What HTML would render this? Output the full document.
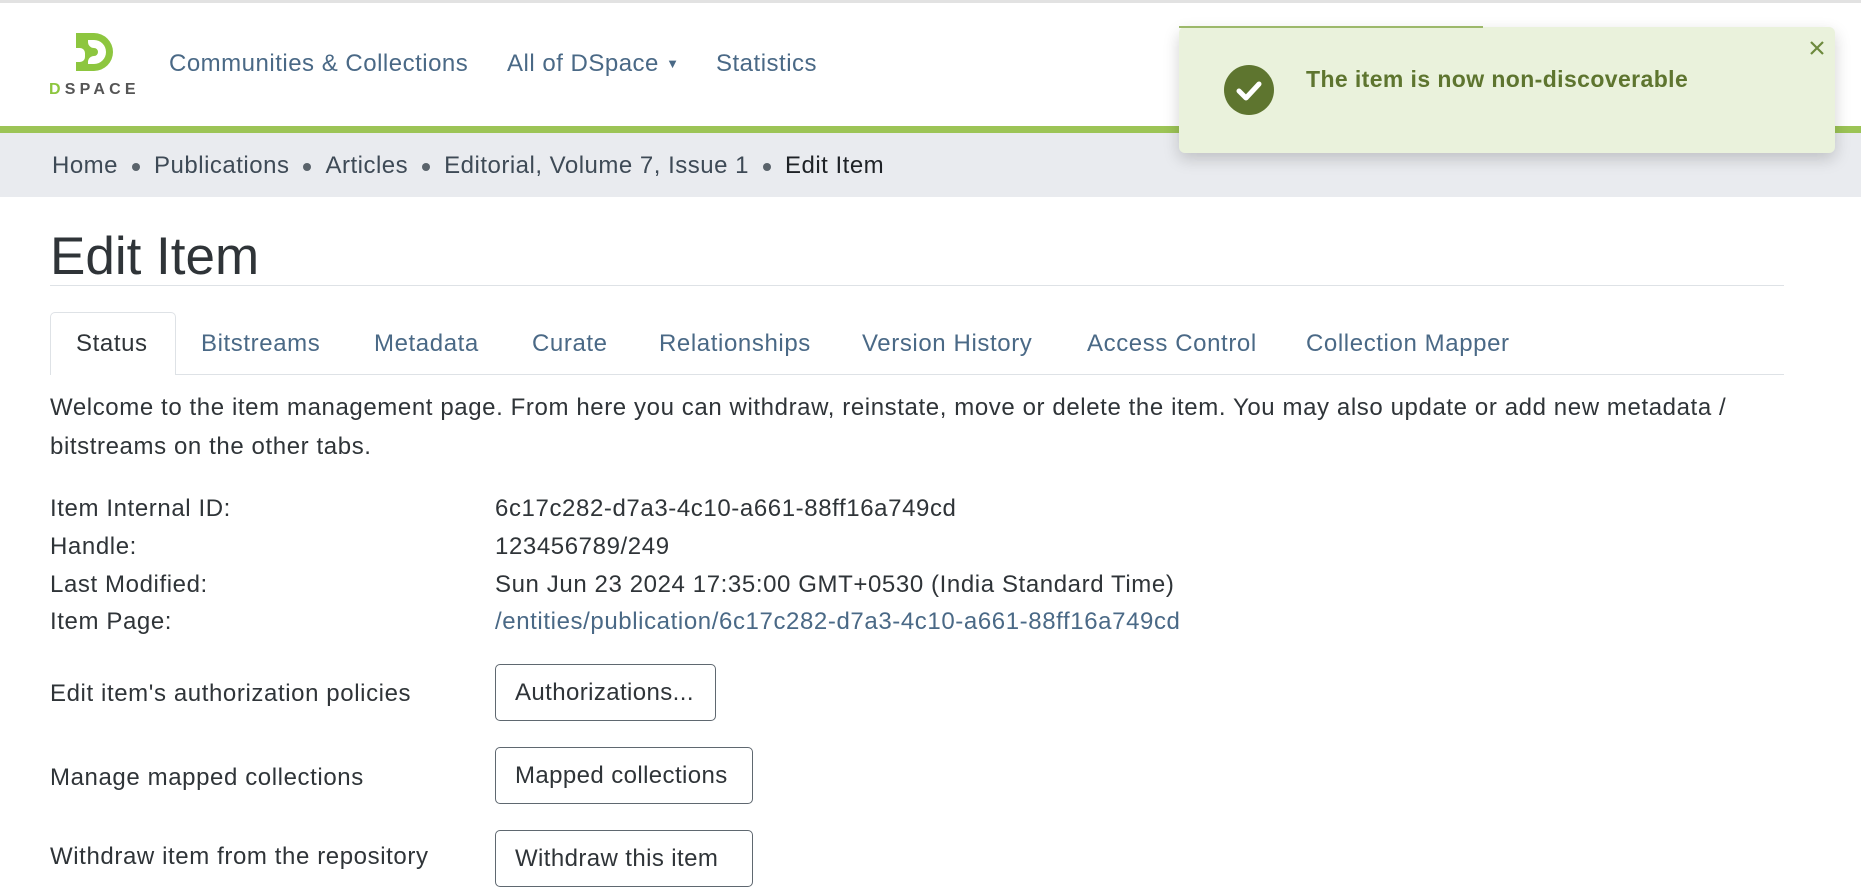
<!DOCTYPE html>
<html><head><meta charset="utf-8"><style>
*{box-sizing:border-box;margin:0;padding:0}
body{width:1861px;height:860px;overflow:hidden;background:#fff;font-family:"Liberation Sans",sans-serif;color:#2f3438;font-size:24px;letter-spacing:0.6px;position:relative}
.a{position:absolute;white-space:nowrap}
.nav{color:#4a6986;font-size:24px;top:50px;letter-spacing:0.5px}
.bc{top:152px;font-size:24px;color:#3e4a56;letter-spacing:0.5px}
.dot{display:inline-block;width:8px;height:8px;border-radius:50%;background:#5a636b;margin:0 14px;vertical-align:middle}
.tab{top:330px;color:#4a6986;font-size:24px;letter-spacing:0.6px}
.lbl{font-size:24px}
.btn{position:absolute;border:1.5px solid #5f6870;border-radius:5px;font-size:24px;color:#2f3438;padding-left:19px;line-height:56px;letter-spacing:0.4px}
</style></head><body>
<div class="a" style="left:0;top:0;width:1861px;height:3px;background:#e2e2e2"></div>
<svg class="a" style="left:72px;top:33px" width="42" height="38" viewBox="0 0 42 38">
<path d="M14 0h8a19 19 0 0 1 0 38h-8v-7h8a12 12 0 0 0 0-24h-8z" fill="#8dc63f"/>
<path d="M4 0h12v9a6 6 0 0 0 6 6a4 4 0 0 1 0 8a6 6 0 0 0-6 6v9H4v-9h4a5 5 0 0 0 5-5v-4a5 5 0 0 0-5-5H4z" fill="#8dc63f"/>
</svg>
<div class="a" style="left:49px;top:81px;font-size:16px;font-weight:bold;letter-spacing:4.2px;color:#555"><span style="color:#8dc63f">D</span>SPACE</div>
<div class="a nav" style="left:169px">Communities &amp; Collections</div>
<div class="a nav" style="left:507px">All of DSpace <span style="font-size:13px;vertical-align:3px">▼</span></div>
<div class="a nav" style="left:716px">Statistics</div>
<div class="a" style="left:0;top:126px;width:1861px;height:7px;background:#9cc456"></div>
<div class="a" style="left:0;top:133px;width:1861px;height:64px;background:#e9ebef"></div>
<div class="a bc" style="left:52px">Home<span class="dot"></span>Publications<span class="dot"></span>Articles<span class="dot"></span>Editorial, Volume 7, Issue 1<span class="dot"></span><span style="color:#1e2226">Edit Item</span></div>
<div class="a" style="left:50px;top:226px;font-size:53px;letter-spacing:0;color:#2f3438">Edit Item</div>
<div class="a" style="left:50px;top:285px;width:1734px;height:1px;background:#dee2e6"></div>
<div class="a" style="left:50px;top:374px;width:1734px;height:1px;background:#dee2e6"></div>
<div class="a" style="left:50px;top:312px;width:126px;height:63px;border:1px solid #dee2e6;border-bottom:none;border-radius:5px 5px 0 0;background:#fff"></div>
<div class="a tab" style="left:76px;color:#2f3438">Status</div>
<div class="a tab" style="left:201px">Bitstreams</div>
<div class="a tab" style="left:374px">Metadata</div>
<div class="a tab" style="left:532px">Curate</div>
<div class="a tab" style="left:659px">Relationships</div>
<div class="a tab" style="left:862px">Version History</div>
<div class="a tab" style="left:1087px">Access Control</div>
<div class="a tab" style="left:1306px">Collection Mapper</div>
<div class="a lbl" style="left:50px;top:394px">Welcome to the item management page. From here you can withdraw, reinstate, move or delete the item. You may also update or add new metadata /</div>
<div class="a lbl" style="left:50px;top:433px">bitstreams on the other tabs.</div>
<div class="a lbl" style="left:50px;top:495px">Item Internal ID:</div>
<div class="a lbl" style="left:50px;top:533px">Handle:</div>
<div class="a lbl" style="left:50px;top:571px">Last Modified:</div>
<div class="a lbl" style="left:50px;top:608px">Item Page:</div>
<div class="a lbl" style="left:495px;top:495px">6c17c282-d7a3-4c10-a661-88ff16a749cd</div>
<div class="a lbl" style="left:495px;top:533px">123456789/249</div>
<div class="a lbl" style="left:495px;top:571px">Sun Jun 23 2024 17:35:00 GMT+0530 (India Standard Time)</div>
<div class="a lbl" style="left:495px;top:608px;color:#4a6986">/entities/publication/6c17c282-d7a3-4c10-a661-88ff16a749cd</div>
<div class="a lbl" style="left:50px;top:680px">Edit item's authorization policies</div>
<div class="a lbl" style="left:50px;top:764px">Manage mapped collections</div>
<div class="a lbl" style="left:50px;top:843px">Withdraw item from the repository</div>
<div class="btn" style="left:495px;top:664px;width:221px;height:57px">Authorizations...</div>
<div class="btn" style="left:495px;top:747px;width:258px;height:57px">Mapped collections</div>
<div class="btn" style="left:495px;top:830px;width:258px;height:57px">Withdraw this item</div>
<div class="a" style="left:1179px;top:27px;width:656px;height:126px;background:#eaf2dc;border-radius:6px;box-shadow:0 6px 16px rgba(0,0,0,0.18)"></div>
<div class="a" style="left:1179px;top:26px;width:304px;height:2px;background:#9cb86a"></div>
<svg class="a" style="left:1224px;top:65px" width="50" height="50" viewBox="0 0 50 50"><circle cx="25" cy="25" r="25" fill="#5e752f"/><path d="M15 26l7 7 13-14" stroke="#fff" stroke-width="5" fill="none" stroke-linecap="round" stroke-linejoin="round"/></svg>
<div class="a" style="left:1306px;top:66px;font-size:23px;font-weight:bold;letter-spacing:0.4px;color:#5e752f">The item is now non-discoverable</div>
<svg class="a" style="left:1809px;top:40px" width="16" height="16" viewBox="0 0 16 16"><path d="M2 2l12 12M14 2L2 14" stroke="#6d8a3d" stroke-width="2.2"/></svg>
</body></html>
